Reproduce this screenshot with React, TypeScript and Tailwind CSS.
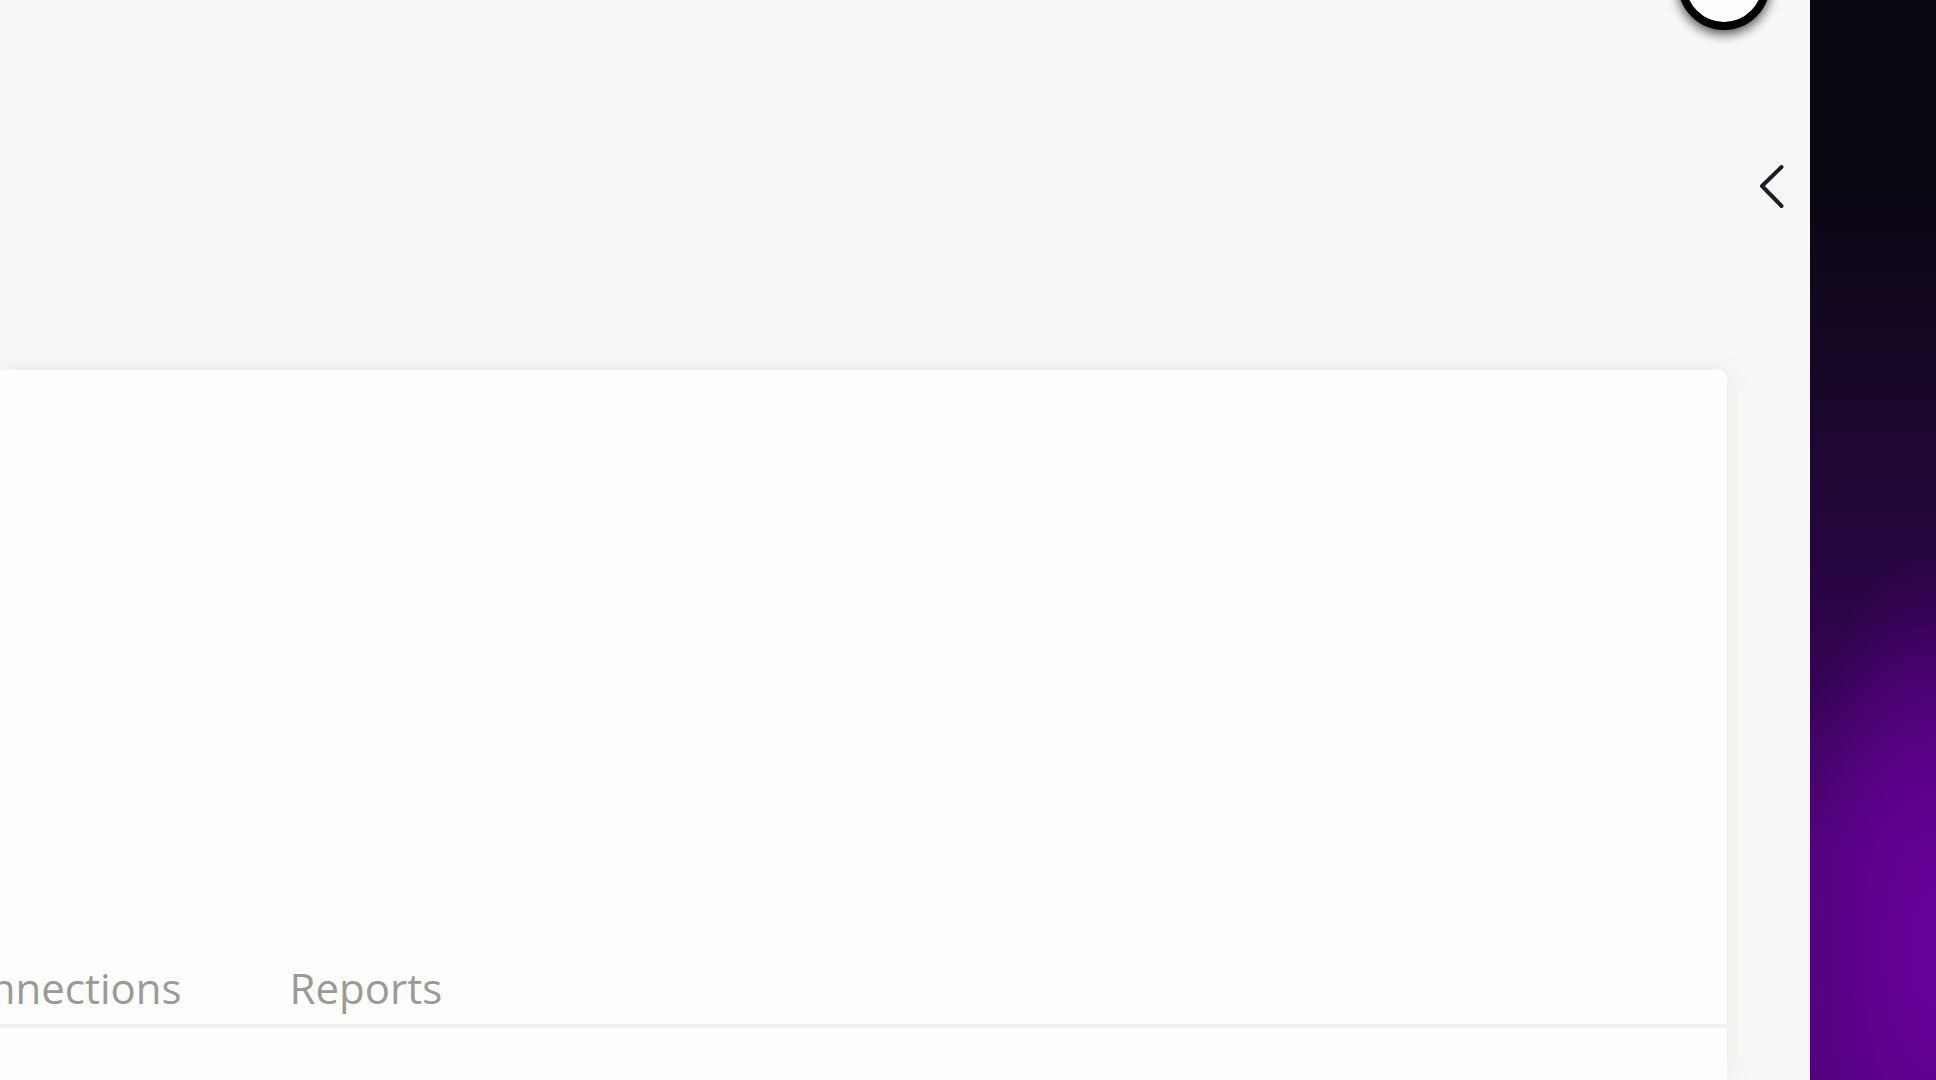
const tabs = ["Connections", "Reports"];

function TopBar() {
    return (
        <header className="flex flex-col items-end pb-[156px]">
            <button
                type="button"
                aria-label="Account"
                className="-mt-[62px] mr-10 size-[92px] rounded-full border-8 border-black bg-[#fdfdfb] shadow-[0_4px_12px_rgba(0,0,0,0.7)]"
            />
            <button type="button" aria-label="Collapse" className="mt-32 mr-6">
                <svg width="28" height="56" viewBox="0 0 28 56" fill="none" className="block">
                    <path
                        d="M23.5 9 L4 28 L23.5 48"
                        stroke="#211a2b"
                        strokeWidth="4"
                        strokeLinecap="round"
                        strokeLinejoin="round"
                    />
                </svg>
            </button>
        </header>
    );
}

function TabBar() {
    return (
        <nav className="-ml-[58px] flex gap-[108px] border-b-4 border-[#efeff6] text-[42px] leading-[56px] text-[#9a9a97]">
            {tabs.map((tab) => (
                <button key={tab} type="button" className="pb-2">
                    {tab}
                </button>
            ))}
        </nav>
    );
}

export default function App() {
    return (
        <div className="flex min-h-screen overflow-hidden bg-[#f8f8f7] font-['Open_Sans','Noto_Sans',sans-serif]">
            <main className="flex min-w-0 flex-1 flex-col">
                <TopBar />
                <section className="mr-[83px] -ml-1 flex-1 rounded-t-lg bg-[#fdfdfb] pt-[590px] shadow-[0_0_24px_rgba(80,80,30,0.1)]">
                    <TabBar />
                </section>
            </main>
            <aside className="flex w-[126px] shrink-0 bg-linear-to-b from-[#08060f] from-15% via-[#2a0445] via-56% to-[#4a0373] to-78%">
                <div className="flex-1 bg-[radial-gradient(ellipse_160px_400px_at_100%_88%,rgba(112,0,164,0.85),rgba(105,0,155,0.6)_50%,transparent)]" />
            </aside>
        </div>
    );
}
